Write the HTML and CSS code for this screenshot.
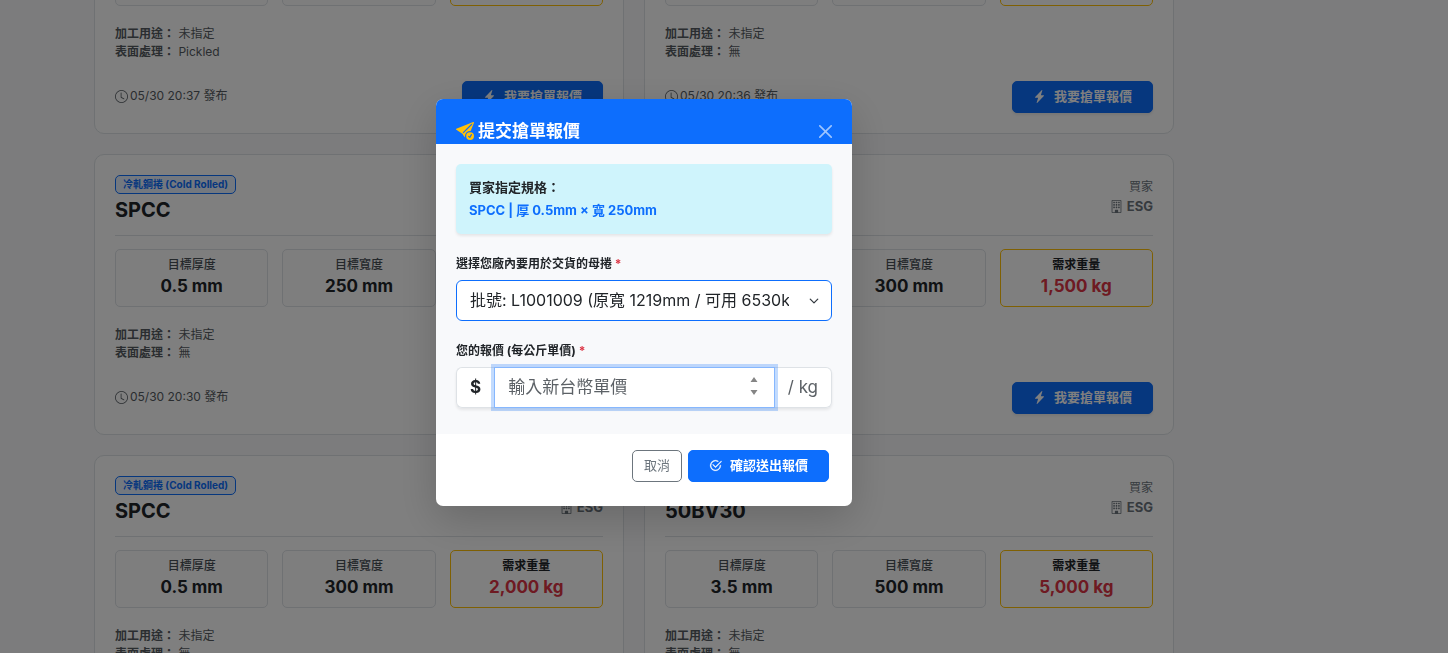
FILE: index.html
```html
<!DOCTYPE html>
<html lang="zh-Hant">
<head>
<meta charset="utf-8">
<meta name="viewport" content="width=device-width, initial-scale=1">
<title>搶單報價</title>
<link rel="stylesheet" href="styles.css">
</head>
<body>
<svg class="sprite" aria-hidden="true">
  <symbol id="clock" viewBox="0 0 16 16"><path d="M8 3.5a.5.5 0 0 0-1 0V9a.5.5 0 0 0 .252.434l3.5 2a.5.5 0 0 0 .496-.868L8 8.71z"/><path d="M8 16A8 8 0 1 0 8 0a8 8 0 0 0 0 16m7-8A7 7 0 1 1 1 8a7 7 0 0 1 14 0"/></symbol>
  <symbol id="bolt" viewBox="0 0 16 16"><path d="M11.251.068a.5.5 0 0 1 .227.58L9.677 6.5H13a.5.5 0 0 1 .364.843l-8 8.5a.5.5 0 0 1-.842-.49L6.323 9.5H3a.5.5 0 0 1-.364-.843l8-8.5a.5.5 0 0 1 .615-.09z"/></symbol>
  <symbol id="building" viewBox="0 0 16 16"><path d="M4 2.5a.5.5 0 0 1 .5-.5h1a.5.5 0 0 1 .5.5v1a.5.5 0 0 1-.5.5h-1a.5.5 0 0 1-.5-.5zm3 0a.5.5 0 0 1 .5-.5h1a.5.5 0 0 1 .5.5v1a.5.5 0 0 1-.5.5h-1a.5.5 0 0 1-.5-.5zm3.500-.5a.5.5 0 0 0-.5.5v1a.5.5 0 0 0 .5.5h1a.5.5 0 0 0 .5-.5v-1a.5.5 0 0 0-.5-.5zM4 5.500a.5.5 0 0 1 .5-.5h1a.5.5 0 0 1 .5.5v1a.5.5 0 0 1-.5.5h-1a.5.5 0 0 1-.5-.5zM7.500 5a.5.5 0 0 0-.5.5v1a.5.5 0 0 0 .5.5h1a.5.5 0 0 0 .5-.5v-1a.5.5 0 0 0-.5-.5zm2.500.5a.5.5 0 0 1 .5-.5h1a.5.5 0 0 1 .5.5v1a.5.5 0 0 1-.5.5h-1a.5.5 0 0 1-.5-.5zM4.500 8a.5.5 0 0 0-.5.5v1a.5.5 0 0 0 .5.5h1a.5.5 0 0 0 .5-.5v-1a.5.5 0 0 0-.5-.5zm2.500.5a.5.5 0 0 1 .5-.5h1a.5.5 0 0 1 .5.5v1a.5.5 0 0 1-.5.5h-1a.5.5 0 0 1-.5-.5zm3.500-.5a.5.5 0 0 0-.5.5v1a.5.5 0 0 0 .5.5h1a.5.5 0 0 0 .5-.5v-1a.5.5 0 0 0-.5-.5z"/><path d="M2 1a1 1 0 0 1 1-1h10a1 1 0 0 1 1 1v14a1 1 0 0 1-1 1H3a1 1 0 0 1-1-1zm11 0H3v14h3v-2.500a.5.5 0 0 1 .5-.5h3a.5.5 0 0 1 .5.5V15h3z"/></symbol>
  <symbol id="send" viewBox="0 0 16 16"><path d="M15.964.686a.5.5 0 0 0-.65-.65L.767 5.855H.766l-.452.18a.5.5 0 0 0-.082.887l.41.26.001.002 4.995 3.178 1.590 2.498C8 14 8 13 8 12.500a4.500 4.500 0 0 1 5.026-4.470zm-1.833 1.890L6.637 10.070l-.215-.338a.5.5 0 0 0-.154-.154l-.338-.215 7.494-7.494 1.178-.471z"/><path d="M16 12.500a3.500 3.500 0 1 1-7 0 3.500 3.500 0 0 1 7 0m-1.993-1.679a.5.5 0 0 0-.686.172l-1.170 1.950-.547-.547a.5.5 0 0 0-.708.708l.774.773a.75.75 0 0 0 1.174-.144l1.335-2.226a.5.5 0 0 0-.172-.686"/></symbol>
  <symbol id="check" viewBox="0 0 16 16"><path d="M2.500 8a5.500 5.500 0 0 1 8.250-4.764.5.5 0 0 0 .5-.866A6.500 6.500 0 1 0 14.500 8a.5.5 0 0 0-1 0 5.500 5.500 0 1 1-11 0"/><path d="M15.354 3.354a.5.5 0 0 0-.708-.708L8 9.293 5.354 6.646a.5.5 0 1 0-.708.708l3 3a.5.5 0 0 0 .708 0z"/></symbol>
</svg>

<main class="orders" id="orders"></main>

<div class="backdrop">
  <section class="modal" role="dialog" aria-modal="true" aria-labelledby="modal-title">
    <header class="modal-header">
      <h2 class="modal-title" id="modal-title"><svg class="icon send"><use href="#send"/></svg>提交搶單報價</h2>
      <button class="close" type="button" aria-label="關閉"><svg class="icon" viewBox="0 0 16 16"><path d="M.293.293a1 1 0 0 1 1.414 0L8 6.586 14.293.293a1 1 0 1 1 1.414 1.414L9.414 8l6.293 6.293a1 1 0 0 1-1.414 1.414L8 9.414l-6.293 6.293a1 1 0 0 1-1.414-1.414L6.586 8 .293 1.707a1 1 0 0 1 0-1.414z"/></svg></button>
    </header>
    <form>
      <div class="modal-body">
        <div class="spec">
          <div class="spec-label">買家指定規格：</div>
          <div class="spec-value">SPCC | 厚 0.5mm × 寬 250mm</div>
        </div>
        <label class="field-label" for="coil">選擇您廠內要用於交貨的母捲 <span class="required">*</span></label>
        <select class="coil" id="coil"><option>批號: L1001009 (原寬 1219mm / 可用 6530kg)</option></select>
        <label class="field-label" for="price">您的報價 (每公斤單價) <span class="required">*</span></label>
        <div class="price-group">
          <span class="addon dollar">$</span>
          <div class="price-wrap">
            <input class="price" id="price" type="number" placeholder="輸入新台幣單價">
            <svg class="spinner" viewBox="0 0 12 24" aria-hidden="true"><path d="M6 3l3.500 5h-7zM6 21l3.500-5h-7z"/></svg>
          </div>
          <span class="addon unit">/ kg</span>
        </div>
      </div>
      <footer class="modal-footer">
        <button class="button cancel" type="button">取消</button>
        <button class="button primary" type="submit"><svg class="icon check"><use href="#check"/></svg>確認送出報價</button>
      </footer>
    </form>
  </section>
</div>
<script src="orders.js"></script>
</body>
</html>
```
FILE: orders.js
```js
const orders = [
  { type: '冷軋鋼捲 (Cold Rolled)', grade: 'SPCC', thick: '0.5', width: '250', weight: '1,000', surface: 'Pickled', time: '05/30 20:37' },
  { type: '冷軋鋼捲 (Cold Rolled)', grade: 'SPCC', thick: '0.5', width: '300', weight: '1,000', surface: '無', time: '05/30 20:36' },
  { type: '冷軋鋼捲 (Cold Rolled)', grade: 'SPCC', thick: '0.5', width: '250', weight: '1,000', surface: '無', time: '05/30 20:30' },
  { type: '冷軋鋼捲 (Cold Rolled)', grade: 'SPCC', thick: '0.5', width: '300', weight: '1,500', surface: '無', time: '05/30 20:30' },
  { type: '冷軋鋼捲 (Cold Rolled)', grade: 'SPCC', thick: '0.5', width: '300', weight: '2,000', surface: '無', time: '05/30 20:30' },
  { type: '冷軋鋼捲 (Cold Rolled)', grade: '50BV30', thick: '3.5', width: '500', weight: '5,000', surface: '無', time: '05/30 20:30' }
];

document.getElementById('orders').innerHTML = orders.map(o => `
  <article class="card">
    <header class="card-head">
      <div><span class="badge">${o.type}</span><h3 class="grade">${o.grade}</h3></div>
      <div class="buyer"><div class="buyer-label">買家</div><div class="buyer-name"><svg class="icon"><use href="#building"/></svg>ESG</div></div>
    </header>
    <div class="stats">
      <div class="stat"><div class="stat-label">目標厚度</div><div class="stat-value">${o.thick} mm</div></div>
      <div class="stat"><div class="stat-label">目標寬度</div><div class="stat-value">${o.width} mm</div></div>
      <div class="stat weight"><div class="stat-label">需求重量</div><div class="stat-value">${o.weight} kg</div></div>
    </div>
    <div class="details">
      <div><strong>加工用途：</strong> 未指定</div>
      <div><strong>表面處理：</strong> ${o.surface}</div>
    </div>
    <footer class="card-foot">
      <div class="time"><svg class="icon"><use href="#clock"/></svg>${o.time} 發布</div>
      <button class="button primary" type="button"><svg class="icon"><use href="#bolt"/></svg>我要搶單報價</button>
    </footer>
  </article>`).join('');
document.getElementById('price').focus();
```
FILE: styles.css
```css
* { box-sizing: border-box; }

body {
  margin: 0;
  height: 100vh;
  overflow: hidden;
  background: #f8f9fa;
  color: #212529;
  font: 13px/20px Inter, "Noto Sans CJK TC", sans-serif;
}

button, input, select { font: inherit; }
h2, h3 { margin: 0; }
.sprite { position: absolute; width: 0; height: 0; }
.icon { width: 13px; height: 13px; fill: currentColor; flex: none; }

/* The order list sits part-way scrolled behind the dialog. */
.orders {
  display: grid;
  grid-template-columns: 1fr 1fr;
  gap: 20px;
  max-width: 1174px;
  padding-left: 94px;
  margin-top: -147px;
}

.card {
  padding: 20px;
  border: 1px solid #dee2e6;
  border-radius: 10px;
  background: #fff;
}

.card-head {
  display: flex;
  justify-content: space-between;
  height: 61px;
  border-bottom: 1px solid #dee2e6;
}

.badge {
  display: block;
  width: fit-content;
  padding: 0 7px;
  border: 1px solid #0d6efd;
  border-radius: 5px;
  background: #e7f1ff;
  color: #0d6efd;
  font-size: 10px;
  font-weight: 700;
  line-height: 17px;
}

.grade { font-size: 20px; line-height: 24px; margin-top: 4px; font-weight: 700; }
.buyer { text-align: right; color: #6c757d; padding-top: 2px; }
.buyer-label { font-size: 12px; line-height: 19px; }
.buyer-name { display: flex; align-items: center; gap: 4px; font-weight: 700; }

.stats {
  display: grid;
  grid-template-columns: repeat(3, 1fr);
  gap: 14px;
  margin-top: 13px;
}

.stat {
  padding: 5px 5px 9px;
  border: 1px solid #dee2e6;
  border-radius: 5px;
  background: #fcfcfd;
  text-align: center;
}

.stat-label { color: #495057; font-size: 12px; line-height: 20px; font-weight: 500; }
.stat-value { font-size: 17px; line-height: 22px; font-weight: 700; }
.weight { border-color: #ffc107; background: #fff; }
.weight .stat-label { color: #212529; font-weight: 700; }
.weight .stat-value { color: #dc3545; }

.details { margin-top: 19px; color: #555b61; font-size: 12px; line-height: 18px; }
.card-foot {
  display: flex;
  align-items: center;
  justify-content: space-between;
  margin-top: 20px;
}
.time { display: flex; align-items: center; gap: 2px; padding-bottom: 2px; color: #555b61; font-size: 12px; }

.button {
  display: flex;
  align-items: center;
  justify-content: center;
  height: 32px;
  padding: 0 11px 2px;
  border: 1px solid #6c757d;
  border-radius: 5px;
  background: #fff;
  color: #6c757d;
}

.button.primary {
  gap: 8px;
  padding: 0 20px 2px;
  border-color: #0d6efd;
  background: #0d6efd;
  color: #fff;
  font-weight: 700;
}
.card-foot .button { box-shadow: 0 2px 3px rgba(0, 0, 0, .08); }

.backdrop {
  position: fixed;
  inset: 0;
  display: flex;
  align-items: flex-start;
  justify-content: center;
  padding: 99px 160px 0 0;
  background: rgba(0, 0, 0, .5);
}

.modal {
  width: 416px;
  overflow: hidden;
  border-radius: 7px;
  background: #fff;
  box-shadow: 0 13px 40px rgba(0, 0, 0, .18);
}

.modal-header {
  display: flex;
  align-items: flex-end;
  justify-content: space-between;
  height: 45px;
  padding: 0 20px;
  background: #0d6efd;
  color: #fff;
}

.modal-title { display: flex; align-items: center; gap: 4px; font-size: 17px; line-height: 26px; }
.icon.send { width: 18px; height: 18px; fill: #ffc107; }
.icon.check { stroke: currentColor; stroke-width: .5px; }
.close { display: flex; padding: 6px 0; border: 0; background: none; color: #fff; opacity: .6; }

.modal-body { padding: 20px 20px 26px; background: #f8f9fb; }

.spec {
  padding: 12px 13px;
  border-radius: 5px;
  background: #cff4fc;
  box-shadow: 0 2px 3px rgba(0, 0, 0, .08);
  font-size: 13px;
  font-weight: 600;
  line-height: 23px;
}
.spec-value { color: #0d6efd; font-weight: 700; }

.field-label { display: block; margin: 21px 0 7px; font-size: 12px; line-height: 18px; font-weight: 700; }
.required { color: #dc3545; }

.coil {
  display: block;
  width: 100%;
  height: 41px;
  padding: 0 42px 2px 13px;
  border: 1px solid #0d6efd;
  border-radius: 6px;
  appearance: none;
  background: #fff url("data:image/svg+xml,%3Csvg xmlns='http://www.w3.org/2000/svg' viewBox='0 0 16 16'%3E%3Cpath fill='none' stroke='%23343a40' stroke-linecap='round' stroke-linejoin='round' stroke-width='2' d='m2 5 6 6 6-6'/%3E%3C/svg%3E") no-repeat right 12px center / 10px;
  color: #212529;
  font-size: 16px;
}

.price-group {
  display: flex;
  height: 41px;
  border-radius: 6px;
  box-shadow: 0 2px 3px rgba(0, 0, 0, .08);
  font-size: 17px;
}

.addon {
  display: flex;
  align-items: center;
  padding: 0 13px 2px;
  border: 1px solid #dee2e6;
  background: #fff;
}
.dollar { border-right: 0; border-radius: 6px 0 0 6px; font-weight: 700; }
.unit { border-left: 0; border-radius: 0 6px 6px 0; color: #5c6166; }

.price-wrap { position: relative; flex: 1; min-width: 0; }
.price {
  width: 100%;
  height: 41px;
  padding: 0 13px 2px;
  border: 1px solid #86b7fe;
  border-radius: 0;
  outline: 0;
  background: #fff;
  box-shadow: 0 0 0 3px rgba(13, 110, 253, .25);
  appearance: textfield;
}
.price::placeholder { color: #5c6166; opacity: 1; }
.price::-webkit-inner-spin-button { appearance: none; }
.spinner { position: absolute; top: 7px; right: 15px; width: 12px; height: 24px; fill: #858585; }

.modal-footer {
  display: flex;
  justify-content: flex-end;
  gap: 6px;
  padding: 16px 23px 24px;
}
```
